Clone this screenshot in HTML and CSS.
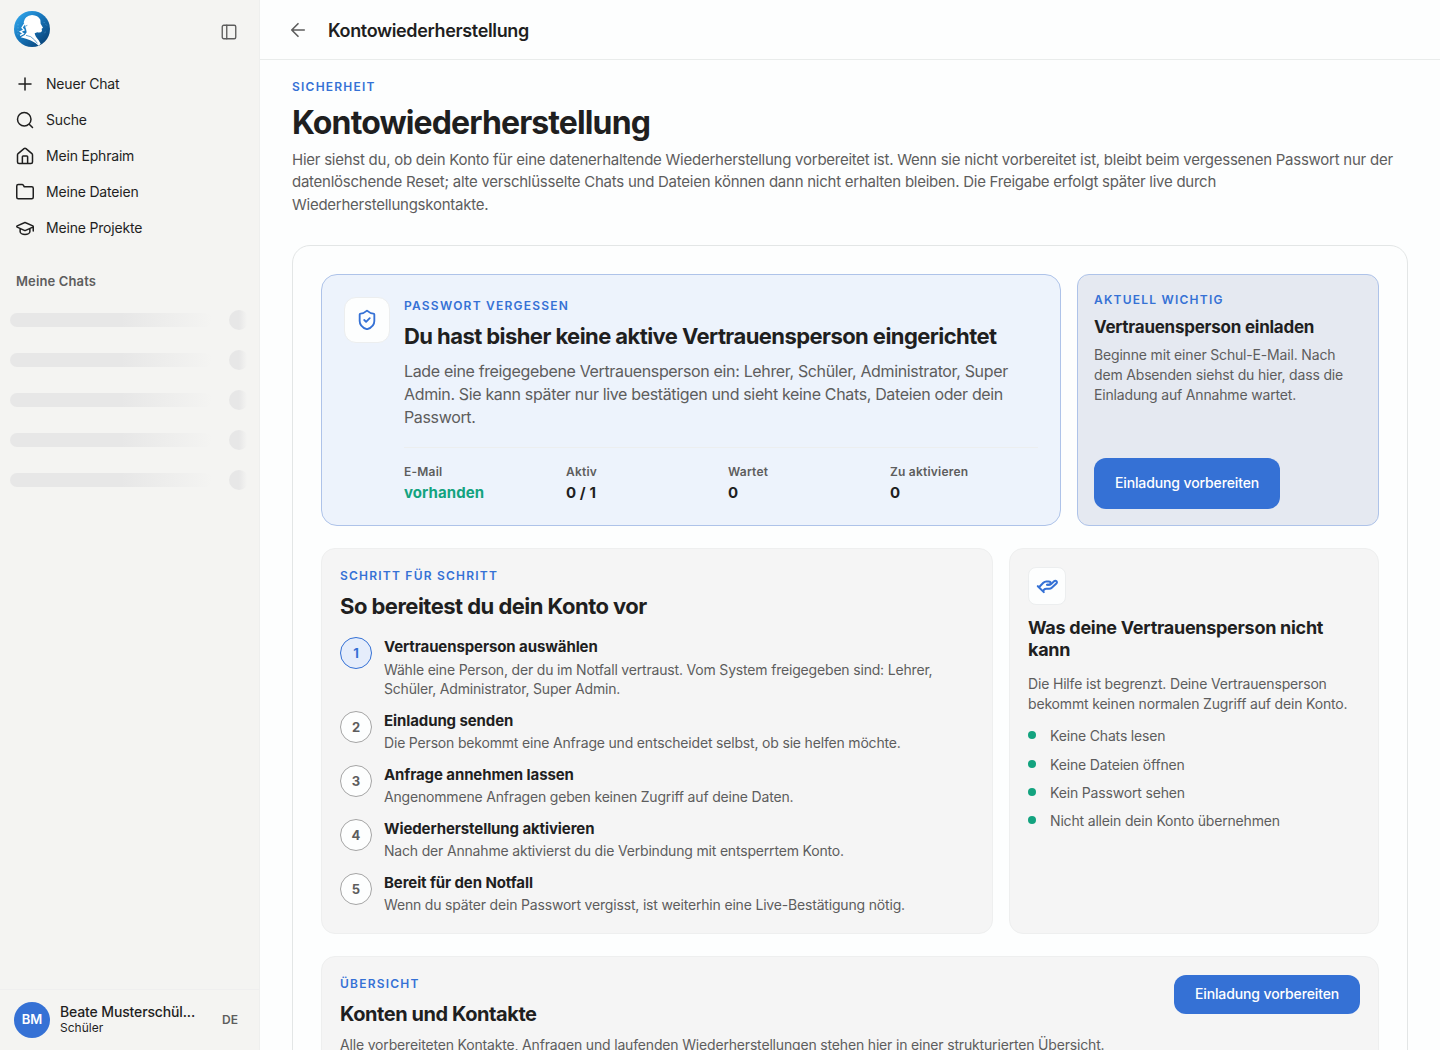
FILE: index.html
```
<!DOCTYPE html>
<html lang="de">
<head>
    <meta charset="UTF-8">
    <title>Kontowiederherstellung</title>
    <link rel="stylesheet" href="styles.css">
</head>
<body>
    <div class="app">
        <aside class="sidebar">
            <div class="brand">
                <svg class="logo" viewBox="0 0 108 108">
                    <defs>
                        <linearGradient id="logoBg" x1="0" y1="0" x2="1" y2="1">
                            <stop offset="0" stop-color="#36b0f5"/>
                            <stop offset=".45" stop-color="#1777bd"/>
                            <stop offset="1" stop-color="#053667"/>
                        </linearGradient>
                    </defs>
                    <circle cx="54" cy="54" r="54" fill="url(#logoBg)"/>
                    <path fill="#fff" d="M29 34 Q32 14 54 12 Q72 13 79 26 L80 38 L87 50 L83 53 L84 60 Q81 66 70 64 L62 67 Q63 76 74 88 L80 98 L74 104 Q54 86 20 79 L32 72 L38 64 L36 54 Z"/>
                    <path fill="none" stroke="#fff" stroke-width="4" d="M32 38 L24 50 L30 57 L19 62 L28 68 L18 73"/>
                    <path fill="none" stroke="#1974b8" stroke-width="2" d="M33 46 L40 43 M36 73 L50 77 L62 87 L70 97"/>
                    <path fill="none" stroke="#9bd4f5" stroke-width="2.5" stroke-dasharray="3 6" opacity=".6" d="M12 40 V72 M90 34 L98 43 M92 65 L99 60"/>
                </svg>
                <svg class="icon toggle" viewBox="0 0 24 24"><rect x="3" y="3" width="18" height="18" rx="2"/><path d="M9 3v18"/></svg>
            </div>
            <ul class="menu">
                <li><svg class="icon" viewBox="0 0 24 24"><path d="M4 12h16M12 4v16"/></svg><span>Neuer Chat</span></li>
                <li><svg class="icon" viewBox="0 0 24 24"><circle cx="11" cy="11" r="9"/><path d="M18 18l4 4"/></svg><span>Suche</span></li>
                <li><svg class="icon" viewBox="0 0 24 24"><path d="M2 10.5a2 2 0 0 1 .8-1.6l7.9-6.7a2 2 0 0 1 2.6 0l7.9 6.7a2 2 0 0 1 .8 1.6V20a2 2 0 0 1-2 2H4a2 2 0 0 1-2-2zM8.5 22v-9a1 1 0 0 1 1-1h5a1 1 0 0 1 1 1v9"/></svg><span>Mein Ephraim</span></li>
                <li><svg class="icon" viewBox="0 0 24 24"><path d="M21 21H3a2 2 0 0 1-2-2V4a2 2 0 0 1 2-2h5a2 2 0 0 1 1.7.9L11 5h10a2 2 0 0 1 2 2v12a2 2 0 0 1-2 2z"/></svg><span>Meine Dateien</span></li>
                <li><svg class="icon" viewBox="0 0 24 24"><path d="M22.4 10.9a1 1 0 0 0 0-1.8L12.9 5a2 2 0 0 0-1.8 0L1.6 9.1a1 1 0 0 0 0 1.8l9.5 4.2a2 2 0 0 0 1.8 0zM23 10v6M5.5 13v4c0 1.8 3 3.5 6.5 3.5s6.5-1.7 6.5-3.5v-4"/></svg><span>Meine Projekte</span></li>
            </ul>
            <h2 class="chats-title">Meine Chats</h2>
            <ul class="skeleton">
                <li><span class="bar"></span><span class="dot"></span></li>
                <li><span class="bar"></span><span class="dot"></span></li>
                <li><span class="bar"></span><span class="dot"></span></li>
                <li><span class="bar"></span><span class="dot"></span></li>
                <li><span class="bar"></span><span class="dot"></span></li>
            </ul>
            <div class="user">
                <span class="avatar">BM</span>
                <div class="user-info">
                    <p class="user-name">Beate Musterschül...</p>
                    <p class="user-role">Schüler</p>
                </div>
                <span class="lang">DE</span>
            </div>
        </aside>

        <main class="main">
            <header class="topbar">
                <svg class="icon back" viewBox="0 0 24 24"><path d="M19.5 12h-15M12 19.5 4.5 12 12 4.5"/></svg>
                <span>Kontowiederherstellung</span>
            </header>
            <div class="content">
                <p class="label">Sicherheit</p>
                <h1>Kontowiederherstellung</h1>
                <p class="intro">Hier siehst du, ob dein Konto für eine datenerhaltende Wiederherstellung vorbereitet ist. Wenn sie nicht vorbereitet ist, bleibt beim vergessenen Passwort nur der datenlöschende Reset; alte verschlüsselte Chats und Dateien können dann nicht erhalten bleiben. Die Freigabe erfolgt später live durch Wiederherstellungskontakte.</p>

                <div class="panel">
                    <div class="row row-top">
                        <section class="status">
                            <span class="status-icon">
                                <svg class="icon" viewBox="0 0 24 24"><path d="M20 13c0 5-3.5 7.5-7.66 8.95a1 1 0 0 1-.67-.01C7.5 20.5 4 18 4 13V6a1 1 0 0 1 1-1c2 0 4.5-1.2 6.24-2.72a1.17 1.17 0 0 1 1.52 0C14.51 3.81 17 5 19 5a1 1 0 0 1 1 1z"/><path d="m9 12 2 2 4-4"/></svg>
                            </span>
                            <div class="status-body">
                                <p class="label">Passwort vergessen</p>
                                <h2>Du hast bisher keine aktive Vertrauensperson eingerichtet</h2>
                                <p class="status-text">Lade eine freigegebene Vertrauensperson ein: Lehrer, Schüler, Administrator, Super Admin. Sie kann später nur live bestätigen und sieht keine Chats, Dateien oder dein Passwort.</p>
                                <dl class="stats">
                                    <div><dt>E-Mail</dt><dd class="ok">vorhanden</dd></div>
                                    <div><dt>Aktiv</dt><dd>0 / 1</dd></div>
                                    <div><dt>Wartet</dt><dd>0</dd></div>
                                    <div><dt>Zu aktivieren</dt><dd>0</dd></div>
                                </dl>
                            </div>
                        </section>
                        <section class="next">
                            <p class="label">Aktuell wichtig</p>
                            <h3>Vertrauensperson einladen</h3>
                            <p class="small">Beginne mit einer Schul-E-Mail. Nach dem Absenden siehst du hier, dass die Einladung auf Annahme wartet.</p>
                            <button class="btn btn-tall">Einladung vorbereiten</button>
                        </section>
                    </div>

                    <div class="row row-mid">
                        <section class="card">
                            <p class="label">Schritt für Schritt</p>
                            <h2>So bereitest du dein Konto vor</h2>
                            <ol class="steps">
                                <li>
                                    <span class="num on">1</span>
                                    <div><h4>Vertrauensperson auswählen</h4><p>Wähle eine Person, der du im Notfall vertraust. Vom System freigegeben sind: Lehrer, Schüler, Administrator, Super Admin.</p></div>
                                </li>
                                <li>
                                    <span class="num">2</span>
                                    <div><h4>Einladung senden</h4><p>Die Person bekommt eine Anfrage und entscheidet selbst, ob sie helfen möchte.</p></div>
                                </li>
                                <li>
                                    <span class="num">3</span>
                                    <div><h4>Anfrage annehmen lassen</h4><p>Angenommene Anfragen geben keinen Zugriff auf deine Daten.</p></div>
                                </li>
                                <li>
                                    <span class="num">4</span>
                                    <div><h4>Wiederherstellung aktivieren</h4><p>Nach der Annahme aktivierst du die Verbindung mit entsperrtem Konto.</p></div>
                                </li>
                                <li>
                                    <span class="num">5</span>
                                    <div><h4>Bereit für den Notfall</h4><p>Wenn du später dein Passwort vergisst, ist weiterhin eine Live-Bestätigung nötig.</p></div>
                                </li>
                            </ol>
                        </section>
                        <section class="card limits">
                            <span class="hand">
                                <svg class="icon" viewBox="0 0 24 24"><path d="M3.5 13 8 8.5C9 7.5 10 7 11.3 7h2.5c1.4 0 2.3.7 2.3 1.800s-1 1.900-2.300 1.900H12"/><path d="M12.5 10.7h1.8c1 0 1.8-.3 2.5-1l2.9-2.8c.8-.8 1.900-.8 2.600-.1.600.7.600 1.700-.1 2.400l-5 4.700c-.8.800-1.700 1.100-2.800 1.100h-3c-1.200 0-2 .3-2.700 1.100L7.5 17.5M2 12.2l6.500 6.500"/></svg>
                            </span>
                            <h3>Was deine Vertrauensperson nicht kann</h3>
                            <p class="small">Die Hilfe ist begrenzt. Deine Vertrauensperson bekommt keinen normalen Zugriff auf dein Konto.</p>
                            <ul>
                                <li>Keine Chats lesen</li>
                                <li>Keine Dateien öffnen</li>
                                <li>Kein Passwort sehen</li>
                                <li>Nicht allein dein Konto übernehmen</li>
                            </ul>
                        </section>
                    </div>

                    <section class="card overview">
                        <div>
                            <p class="label">Übersicht</p>
                            <h2>Konten und Kontakte</h2>
                            <p class="small">Alle vorbereiteten Kontakte, Anfragen und laufenden Wiederherstellungen stehen hier in einer strukturierten Übersicht.</p>
                        </div>
                        <button class="btn">Einladung vorbereiten</button>
                    </section>
                </div>
            </div>
        </main>
    </div>
</body>
</html>
```
FILE: styles.css
```
*{ box-sizing: border-box;}
body,p,h1,h2,h3,h4,ul,ol,dl,dt,dd{ margin: 0; padding: 0;}
ul,ol{ list-style: none;}
body{
    height: 1050px;
    overflow: hidden;
    font-family: Inter, "Liberation Sans", sans-serif;
    color: #1f1f1f;
    background-color: #fdfefe;
}
.app{
    display: flex;
    height: 1050px;
    overflow: hidden;
}
.icon{
    flex: none;
    display: block;
    width: 18px;
    height: 18px;
    fill: none;
    stroke: currentColor;
    stroke-width: 2;
    stroke-linecap: round;
    stroke-linejoin: round;
}

/* sidebar */
.sidebar{
    flex: none;
    display: flex;
    flex-direction: column;
    width: 260px;
    background-color: #f4f4f2;
    border-right: 1px solid #eeefee;
}
.brand{
    display: flex;
    justify-content: space-between;
    height: 66px;
    padding: 11px 21px 0 14px;
}
.logo{
    width: 36px;
    height: 36px;
}
.toggle{
    margin-top: 12px;
    color: #5d5d5d;
    stroke-width: 1.8;
}
.menu li{
    display: flex;
    align-items: center;
    gap: 12px;
    height: 36px;
    padding-left: 16px;
    font-size: 14px;
    letter-spacing: -.19px;
}
.menu span{
    padding-bottom: 2px;
}
.chats-title{
    margin-top: 26px;
    padding-left: 16px;
    font-size: 13px;
    line-height: 18px;
    font-weight: 600;
    letter-spacing: .13px;
    color: #5d5d5d;
}
.skeleton{
    margin-top: 10px;
}
.skeleton li{
    display: flex;
    align-items: center;
    justify-content: space-between;
    height: 40px;
    padding: 0 10px;
}
.skeleton .bar{
    width: 202px;
    height: 14px;
    border-radius: 7px;
    background: linear-gradient(90deg, #e7e7e7 55%, #f4f4f2 100%);
}
.skeleton .dot{
    width: 20px;
    height: 20px;
    border-radius: 50%;
    background: linear-gradient(90deg, #e7e7e7 50%, #f4f4f2 90%);
}
.user{
    display: flex;
    align-items: center;
    height: 61px;
    margin-top: auto;
    padding: 0 21px 0 14px;
    border-top: 1px solid #efefef;
}
.avatar{
    flex: none;
    width: 36px;
    height: 36px;
    border-radius: 50%;
    background-color: #3571d5;
    color: #fff;
    font-size: 13px;
    font-weight: 600;
    line-height: 35px;
    text-align: center;
}
.user-info{
    width: 140px;
    margin-left: 10px;
    padding-bottom: 2px;
}
.user-name{
    white-space: nowrap;
    font-size: 14px;
    line-height: 17px;
    font-weight: 500;
    letter-spacing: -.14px;
}
.user-role{
    font-size: 12px;
    line-height: 15px;
}
.lang{
    margin-left: auto;
    padding-bottom: 1px;
    font-size: 12px;
    font-weight: 600;
    color: #5d5d5d;
}

/* main */
.main{
    flex: 1;
    min-width: 0;
}
.topbar{
    display: flex;
    align-items: center;
    gap: 20px;
    height: 60px;
    padding: 1px 0 0 28px;
    border-bottom: 1px solid #e9eceb;
    font-size: 18px;
    font-weight: 600;
    letter-spacing: -.36px;
}
.back{
    width: 20px;
    height: 20px;
    color: #5d5d5d;
    stroke-width: 2;
}
.content{
    padding: 19px 32px 0;
}
.label{
    font-size: 12px;
    line-height: 16px;
    font-weight: 600;
    letter-spacing: 1.22px;
    text-transform: uppercase;
    color: #3571d5;
}
h1{
    margin-top: 9px;
    font-size: 32px;
    line-height: 38px;
    font-weight: 700;
    letter-spacing: -.88px;
}
.intro{
    margin-top: 6.7px;
    font-size: 15px;
    line-height: 22.5px;
    letter-spacing: -.25px;
    color: #5d5d5d;
}
.panel{
    margin-top: 28.8px;
    height: 1000px;
    padding: 28px;
    border: 1px solid #e3e6e6;
    border-radius: 18px;
}
.row{
    display: grid;
    gap: 16px;
    margin-bottom: 22px;
}
.row-top{
    grid-template-columns: 740px 302px;
    height: 252px;
}
.row-mid{
    grid-template-columns: 672px 370px;
    height: 386px;
}
h2{
    font-size: 22px;
    line-height: 27px;
    font-weight: 650;
    letter-spacing: -.53px;
}
.small{
    font-size: 14px;
    line-height: 20px;
    letter-spacing: -.17px;
    color: #5d5d5d;
}
.status{
    display: flex;
    gap: 14px;
    padding: 22px;
    border: 1px solid #aec3e9;
    border-radius: 16px;
    background-color: #edf3fc;
}
.status-icon,.hand{
    flex: none;
    display: flex;
    align-items: center;
    justify-content: center;
    width: 46px;
    height: 46px;
    border: 1px solid #eceeef;
    border-radius: 12px;
    background-color: #fdfefe;
    color: #3571d5;
}
.status-icon .icon{
    width: 22px;
    height: 22px;
}
.status-body{
    flex: 1;
}
.status .label{
    margin-top: 1px;
}
.status h2{
    margin-top: 9px;
    letter-spacing: -.57px;
}
.status-text{
    margin-top: 10px;
    font-size: 16px;
    line-height: 23px;
    letter-spacing: -.35px;
    color: #5d5d5d;
}
.stats{
    display: grid;
    grid-template-columns: repeat(4, 1fr);
    gap: 14px;
    margin-top: 18px;
    padding-top: 16px;
    border-top: 1px solid #eceeef;
}
.stats dt{
    font-size: 12px;
    line-height: 16px;
    font-weight: 600;
    letter-spacing: .22px;
    color: #5d5d5d;
}
.stats dd{
    margin-top: 3px;
    font-size: 15px;
    line-height: 20px;
    font-weight: 700;
    letter-spacing: .1px;
}
.stats .ok{
    color: #13a37f;
}
.next{
    display: flex;
    flex-direction: column;
    align-items: flex-start;
    padding: 17px 16px 16px;
    border: 1px solid #aec3e9;
    border-radius: 12px;
    background-color: #e5e9f1;
}
.next h3{
    margin-top: 8px;
    font-size: 17px;
    line-height: 22px;
    font-weight: 650;
    letter-spacing: -.24px;
}
.next .small{
    margin-top: 7px;
}
.btn{
    flex: none;
    width: 186px;
    height: 39px;
    padding: 0 0 2px;
    border: 0;
    border-radius: 12px;
    background-color: #3571d5;
    color: #fff;
    font-family: inherit;
    font-size: 14px;
    font-weight: 500;
    letter-spacing: -.12px;
}
.btn-tall{
    height: 51px;
    margin-top: auto;
}
.card{
    padding: 18px;
    border: 1px solid #eeefef;
    border-radius: 14px;
    background-color: #f5f5f5;
}
.card .label{
    margin-top: 1px;
}
.card h2{
    margin-top: 9px;
}
.steps{
    display: grid;
    gap: 12px;
    margin-top: 17.3px;
}
.steps li{
    display: flex;
    gap: 12px;
}
.num{
    flex: none;
    width: 32px;
    height: 32px;
    border: 1px solid #a5a5a5;
    border-radius: 50%;
    background-color: #fdfefe;
    color: #5d5d5d;
    font-size: 13px;
    font-weight: 700;
    line-height: 30px;
    text-align: center;
}
.num.on{
    border-color: #3571d5;
    background-color: #e5edfb;
    color: #3571d5;
}
.steps h4{
    font-size: 15px;
    line-height: 20px;
    font-weight: 680;
    letter-spacing: -.1px;
}
.steps p{
    margin-top: 2.4px;
    font-size: 14px;
    line-height: 19.6px;
    letter-spacing: -.18px;
    color: #5d5d5d;
}
.hand{
    width: 38px;
    height: 38px;
    border-radius: 8px;
}
.hand .icon{
    width: 22px;
    height: 22px;
    stroke-width: 2.2;
}
.limits h3{
    margin-top: 12px;
    font-size: 18px;
    line-height: 22px;
    font-weight: 650;
    letter-spacing: -.28px;
}
.limits .small{
    margin-top: 13px;
}
.limits ul{
    margin-top: 12.2px;
}
.limits li{
    display: flex;
    gap: 14px;
    margin-bottom: 8.4px;
    font-size: 14px;
    line-height: 20px;
    letter-spacing: -.17px;
    color: #5d5d5d;
}
.limits li::before{
    content: "";
    width: 8px;
    height: 8px;
    margin-top: 5px;
    border-radius: 50%;
    background-color: #13a37f;
}
.overview{
    display: flex;
    justify-content: space-between;
    height: 300px;
}
.overview h2{
    font-size: 20px;
    letter-spacing: -.43px;
}
.overview .small{
    margin-top: 7px;
}
```
